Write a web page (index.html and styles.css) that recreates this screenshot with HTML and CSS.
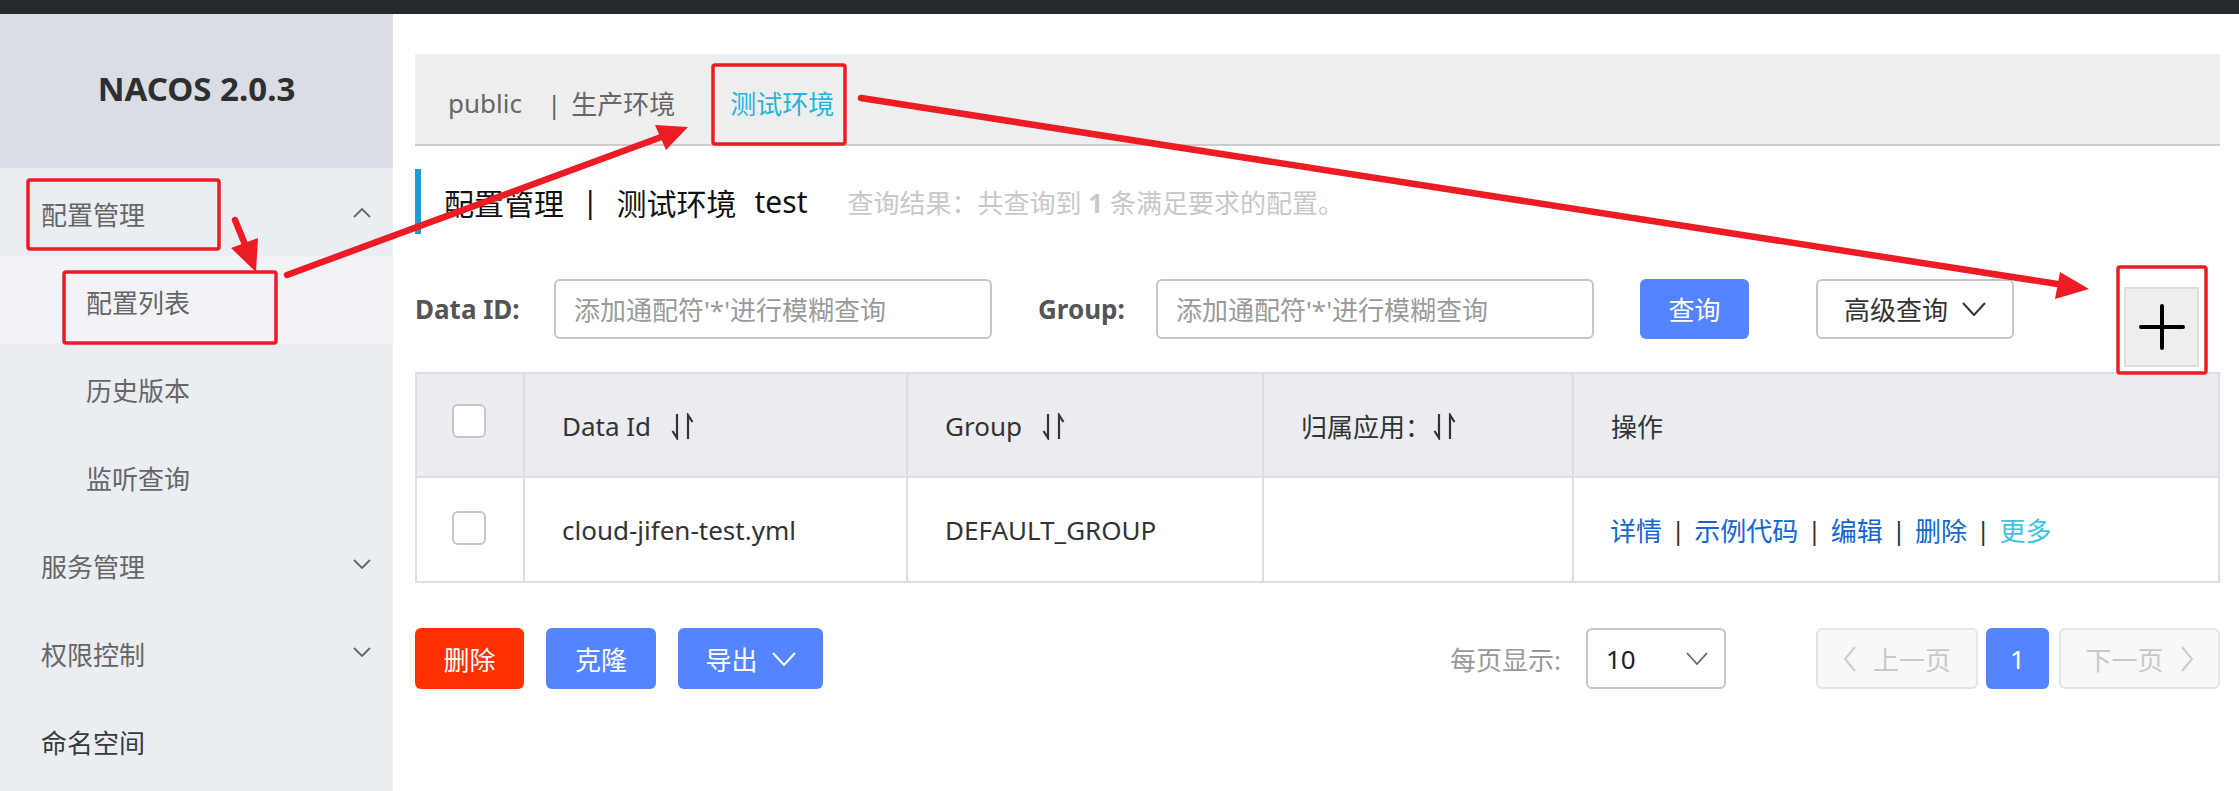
FILE: index.html
```html
<!DOCTYPE html>
<html lang="zh-CN">
<head>
<meta charset="utf-8">
<title>NACOS 2.0.3</title>
<link rel="stylesheet" href="styles.css">
</head>
<body>
<div class="topbar"></div>
<div class="shell">
  <aside class="sidebar">
    <div class="logo">NACOS 2.0.3</div>
    <div class="menu-item open"><span>配置管理</span>
      <svg class="chev" width="18" height="11" viewBox="0 0 18 11"><polyline points="1,10 9,2 17,10" fill="none" stroke="#666" stroke-width="1.8"/></svg>
    </div>
    <div class="sub-item active"><span>配置列表</span></div>
    <div class="sub-item"><span>历史版本</span></div>
    <div class="sub-item"><span>监听查询</span></div>
    <div class="menu-item"><span>服务管理</span>
      <svg class="chev" width="18" height="11" viewBox="0 0 18 11"><polyline points="1,1 9,9 17,1" fill="none" stroke="#666" stroke-width="1.8"/></svg>
    </div>
    <div class="menu-item"><span>权限控制</span>
      <svg class="chev" width="18" height="11" viewBox="0 0 18 11"><polyline points="1,1 9,9 17,1" fill="none" stroke="#666" stroke-width="1.8"/></svg>
    </div>
    <div class="menu-item dark"><span>命名空间</span></div>
  </aside>

  <main class="main">
    <div class="tabs">
      <span class="tab tab-public">public</span>
      <span class="tab tab-prod"><span class="tab-sep">|</span>生产环境</span>
      <span class="tab tab-active">测试环境</span>
    </div>

    <div class="title">
      <span>配置管理</span><span class="title-sep">|</span><span>测试环境</span><span class="title-ns">test</span>
      <span class="title-sub">查询结果：共查询到 <b>1</b> 条满足要求的配置。</span>
    </div>

    <div class="search">
      <div class="label label-id">Data ID:</div>
      <div class="input"><span class="ph">添加通配符'*'进行模糊查询</span></div>
      <div class="label label-group">Group:</div>
      <div class="input"><span class="ph">添加通配符'*'进行模糊查询</span></div>
      <div class="btn btn-primary btn-query">查询</div>
      <div class="btn btn-outline btn-adv">高级查询
        <svg width="24" height="14" viewBox="0 0 24 14"><polyline points="1,1 12,13 23,1" fill="none" stroke="#333" stroke-width="2"/></svg>
      </div>
      <div class="add-btn">
        <svg width="46" height="46" viewBox="0 0 46 46"><line x1="2" y1="23" x2="44" y2="23" stroke="#000" stroke-width="4" stroke-linecap="round"/><line x1="23" y1="2" x2="23" y2="44" stroke="#000" stroke-width="4" stroke-linecap="round"/></svg>
      </div>
    </div>

    <div class="table">
      <div class="cell head cb-cell"><span class="checkbox"></span></div>
      <div class="cell head">Data Id
        <svg class="sort" width="24" height="27" viewBox="0 0 24 27"><path d="M6 1 V25 L1.5 18" fill="none" stroke="#333" stroke-width="2.2"/><path d="M17 26 V2 L21.5 9" fill="none" stroke="#333" stroke-width="2.2"/></svg>
      </div>
      <div class="cell head">Group
        <svg class="sort" width="24" height="27" viewBox="0 0 24 27"><path d="M6 1 V25 L1.5 18" fill="none" stroke="#333" stroke-width="2.2"/><path d="M17 26 V2 L21.5 9" fill="none" stroke="#333" stroke-width="2.2"/></svg>
      </div>
      <div class="cell head">归属应用：
        <svg class="sort sort-tight" width="24" height="27" viewBox="0 0 24 27"><path d="M6 1 V25 L1.5 18" fill="none" stroke="#333" stroke-width="2.2"/><path d="M17 26 V2 L21.5 9" fill="none" stroke="#333" stroke-width="2.2"/></svg>
      </div>
      <div class="cell head last">操作</div>

      <div class="cell body cb-cell"><span class="checkbox"></span></div>
      <div class="cell body">cloud-jifen-test.yml</div>
      <div class="cell body">DEFAULT_GROUP</div>
      <div class="cell body"></div>
      <div class="cell body last actions">
        <a class="link">详情</a><span class="sep">|</span><a class="link">示例代码</a><span class="sep">|</span><a class="link">编辑</a><span class="sep">|</span><a class="link">删除</a><span class="sep">|</span><a class="link more">更多</a>
      </div>
    </div>

    <div class="footer">
      <div class="btn btn-danger btn-del">删除</div>
      <div class="btn btn-primary btn-clone">克隆</div>
      <div class="btn btn-primary btn-export">导出
        <svg width="24" height="14" viewBox="0 0 24 14"><polyline points="1,1 12,13 23,1" fill="none" stroke="#fff" stroke-width="2"/></svg>
      </div>
      <div class="pager">
        <span class="pager-label">每页显示:</span>
        <div class="select"><span>10</span>
          <svg width="22" height="13" viewBox="0 0 22 13"><polyline points="1,1 11,12 21,1" fill="none" stroke="#666" stroke-width="1.8"/></svg>
        </div>
        <div class="page-btn prev">
          <svg width="14" height="26" viewBox="0 0 14 26"><polyline points="12,1 2,13 12,25" fill="none" stroke="#ccc" stroke-width="2"/></svg>
          <span>上一页</span>
        </div>
        <div class="page-num">1</div>
        <div class="page-btn next">
          <span>下一页</span>
          <svg width="14" height="26" viewBox="0 0 14 26"><polyline points="2,1 12,13 2,25" fill="none" stroke="#ccc" stroke-width="2"/></svg>
        </div>
      </div>
    </div>
  </main>
</div>

<svg class="annotations" width="2239" height="791" viewBox="0 0 2239 791">
  <g fill="none" stroke="#ed1c24" stroke-width="3.5">
    <rect x="28" y="180" width="191" height="69" rx="2"/>
    <rect x="64" y="272" width="212" height="71" rx="2"/>
    <rect x="713" y="65" width="132" height="79" rx="2"/>
    <rect x="2118" y="267" width="88" height="106" rx="2"/>
  </g>
  <g stroke="#ed1c24" stroke-width="6.5" stroke-linecap="round">
    <line x1="235" y1="220" x2="249" y2="254"/>
    <line x1="287" y1="275" x2="664" y2="136"/>
    <line x1="861" y1="98" x2="2064" y2="285"/>
  </g>
  <g fill="#ed1c24">
    <polygon points="256,272 231,248 258,238"/>
    <polygon points="688,127 655,125 666,150"/>
    <polygon points="2089,289 2060,272 2055,299"/>
  </g>
</svg>
</body>
</html>
```

FILE: styles.css
```css
* { box-sizing: border-box; margin: 0; padding: 0; }
html, body { width: 2239px; height: 791px; overflow: hidden; }
body {
  font-family: "Noto Sans", "Noto Sans CJK SC", sans-serif;
  background: #fff;
  color: #333;
  position: relative;
}

.topbar { height: 14px; background: #25292e; }
.shell { display: flex; height: 777px; }

/* sidebar */
.sidebar { width: 393px; flex-shrink: 0; background: #eaedf2; }
.logo {
  height: 154px; background: #d9dde4;
  display: flex; align-items: center; justify-content: center;
  font-size: 33px; font-weight: 700; color: #2f2f2f;
  padding-bottom: 6px;
}
.menu-item, .sub-item {
  height: 88px; display: flex; align-items: center; justify-content: space-between;
  font-size: 26px; color: #666;
  padding-top: 4px;
}
.menu-item { padding-left: 41px; padding-right: 22px; }
.menu-item .chev { margin-top: -4px; }
.menu-item.dark { color: #3a3a3a; }
.sub-item { padding-left: 86px; }
.sub-item.active { background: #f2f3f7; }
.chev { display: block; }

/* main */
.main { flex: 1; padding: 40px 19px 0 22px; min-width: 0; }

.tabs {
  height: 92px; background: #eee; border-bottom: 2px solid #ccc;
  display: flex; align-items: center; padding: 8px 0 0 33px;
  font-size: 26px; color: #666;
}
.tab-public { margin-right: 25px; }
.tab-sep { margin-right: 10px; }
.tab-active { margin-left: 55px; color: #1fb5dc; }

.title {
  margin-top: 23px; height: 65px;
  border-left: 6px solid #1a9bd6;
  padding-left: 23px;
  display: flex; align-items: center;
  font-size: 30px; color: #111;
}
.title-sep { margin: 0 18px; }
.title-ns { margin-left: 18px; }
.title-sub { margin-left: 40px; font-size: 26px; color: #c8c8c8; }
.title-sub b { font-weight: 700; }

/* search */
.search { margin-top: 45px; display: flex; align-items: flex-start; height: 88px; }
.label { height: 60px; line-height: 60px; font-size: 26px; font-weight: 700; color: #555; }
.label-id { width: 139px; }
.label-group { width: 118px; margin-left: 46px; }
.input {
  width: 438px; height: 60px; border: 2px solid #c4c6cf; border-radius: 6px;
  display: flex; align-items: center; padding-left: 18px;
  font-size: 26px;
}
.ph { color: #9a9a9a; }

.btn {
  height: 61px; border-radius: 6px;
  display: flex; align-items: center; justify-content: center; gap: 14px;
  font-size: 26px;
}
.btn-primary { background: #5584ff; color: #fff; }
.btn-danger { background: #ff3000; color: #fff; }
.btn-outline { background: #fff; border: 2px solid #c4c6cf; color: #333; }
.btn-query { width: 109px; height: 60px; margin-left: 46px; }
.btn-adv { width: 198px; height: 60px; margin-left: 67px; }
.add-btn {
  width: 75px; height: 80px; margin-top: 8px; margin-left: auto; margin-right: 21px;
  background: #eee; border: 2px solid #ddd;
  display: flex; align-items: center; justify-content: center;
}

/* table */
.table {
  margin-top: 5px;
  display: grid; grid-template-columns: 108px 383px 356px 310px 1fr;
  border: 2px solid #dcdee3;
}
.cell {
  display: flex; align-items: center;
  padding-left: 37px;
  border-right: 2px solid #dcdee3;
  font-size: 26px; color: #333;
}
.cell.last { border-right: none; }
.head { height: 104px; background: #ebecf0; border-bottom: 2px solid #dcdee3; padding-top: 2px; }
.body { height: 103px; background: #fff; }
.cb-cell { padding-left: 35px; padding-top: 0; }
.head.cb-cell { padding-top: 0; }
.checkbox {
  display: block; width: 34px; height: 34px;
  border: 2px solid #c4c6cf; border-radius: 6px; background: #fff;
}
.head.cb-cell .checkbox { margin-top: -8px; }
.body.cb-cell .checkbox { margin-top: -4px; }
.sort { margin-left: 20px; }
.sort.sort-tight { margin-left: 2px; }
.actions { padding-left: 36px; }
.link { color: #1266d1; text-decoration: none; }
.link.more { color: #3cc1e3; }
.sep { margin: 0 9px; color: #333; }

/* footer */
.footer { margin-top: 45px; display: flex; align-items: center; height: 61px; }
.btn-del { width: 109px; }
.btn-clone { width: 110px; margin-left: 22px; }
.btn-export { width: 145px; margin-left: 22px; }

.pager { margin-left: auto; display: flex; align-items: center; }
.pager-label { font-size: 26px; color: #999; margin-right: 25px; }
.select {
  width: 140px; height: 61px; border: 2px solid #c4c6cf; border-radius: 6px;
  display: flex; align-items: center; justify-content: space-between;
  padding: 0 16px 0 18px; font-size: 26px; color: #222;
}
.page-btn {
  height: 61px; border: 2px solid #e3e4e8; border-radius: 6px; background: #f7f8fa;
  display: flex; align-items: center; justify-content: center; gap: 16px;
  font-size: 26px; color: #c8c8c8;
}
.prev { width: 162px; margin-left: 90px; }
.next { width: 161px; margin-left: 10px; }
.page-num {
  width: 63px; height: 61px; margin-left: 8px; border-radius: 6px; background: #5584ff;
  color: #fff; font-size: 26px;
  display: flex; align-items: center; justify-content: center;
}

/* annotation overlay */
.annotations { position: absolute; left: 0; top: 0; pointer-events: none; }
```
